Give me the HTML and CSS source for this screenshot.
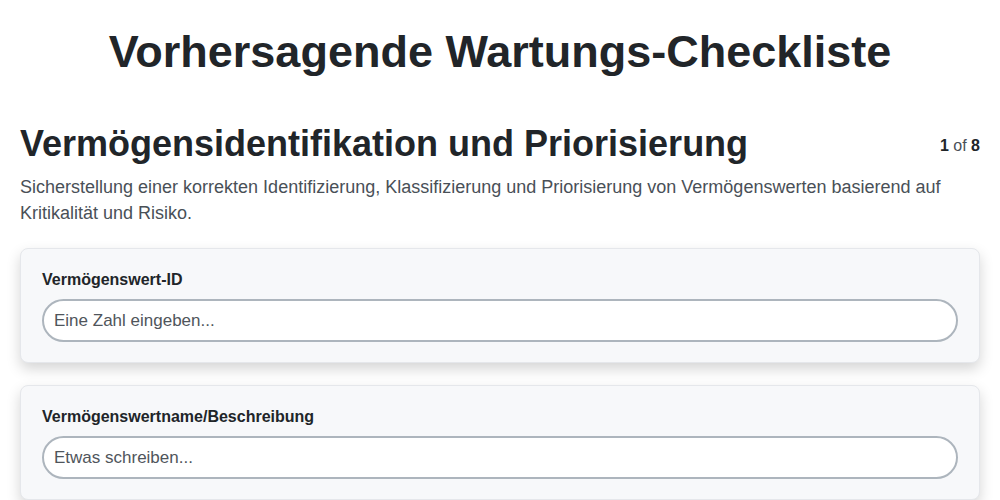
FILE: index.html
```html
<!DOCTYPE html>
<html lang="de">
<head>
<meta charset="utf-8">
<title>Vorhersagende Wartungs-Checkliste</title>
<link rel="stylesheet" href="styles.css">
</head>
<body>
<main class="page">
  <h1 class="title">Vorhersagende Wartungs-Checkliste</h1>
  <section class="section">
    <div class="section-head">
      <h2 class="section-title">Vermögensidentifikation und Priorisierung</h2>
      <div class="pager"><b>1</b> of <b>8</b></div>
    </div>
    <p class="section-desc">Sicherstellung einer korrekten Identifizierung, Klassifizierung und Priorisierung von Vermögenswerten basierend auf Kritikalität und Risiko.</p>
    <div class="card">
      <label class="label" for="f1">Vermögenswert-ID</label>
      <input class="input" id="f1" type="text" placeholder="Eine Zahl eingeben...">
    </div>
    <div class="card">
      <label class="label" for="f2">Vermögenswertname/Beschreibung</label>
      <input class="input" id="f2" type="text" placeholder="Etwas schreiben...">
    </div>
  </section>
</main>
</body>
</html>
```
FILE: styles.css
```css
* { box-sizing: border-box; }
html, body { margin: 0; padding: 0; background: #fff; }
body {
  font-family: "Liberation Sans", Arial, sans-serif;
  color: #212529;
}
.page { padding: 0 20px; }
.title {
  margin: 0;
  padding-top: 25px;
  text-align: center;
  font-size: 45px;
  line-height: 54px;
  font-weight: 700;
  color: #212529;
}
.section { margin-top: 43px; }
.section-head {
  display: flex;
  justify-content: space-between;
  align-items: flex-start;
}
.section-title {
  margin: 0;
  font-size: 36px;
  line-height: 44px;
  font-weight: 700;
  color: #212529;
}
.pager {
  font-size: 16px;
  line-height: 20px;
  padding-top: 14px;
  color: #495057;
}
.pager b { color: #212529; }
.section-desc {
  margin: 8px 0 0;
  font-size: 18px;
  line-height: 26px;
  color: #495057;
}
.card {
  margin-top: 22px;
  background: #f7f8fa;
  border: 1px solid #e5e7eb;
  border-radius: 8px;
  padding: 21px 21px 20px;
  box-shadow: 0 6px 14px rgba(0,0,0,0.17);
  display: flex;
  flex-direction: column;
  gap: 9px;
}
.card + .card { margin-top: 22px; }
.label {
  font-size: 16px;
  line-height: 20px;
  font-weight: 700;
  color: #212529;
}
.input {
  height: 43px;
  border: 2px solid #adb5bd;
  border-radius: 22px;
  background: #fff;
  padding: 0 10px;
  font-family: "Liberation Sans", Arial, sans-serif;
  font-size: 17px;
  color: #212529;
  outline: none;
}
.input::placeholder { color: #4f555b; }
```
